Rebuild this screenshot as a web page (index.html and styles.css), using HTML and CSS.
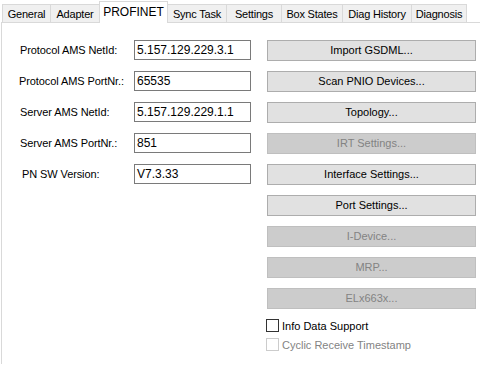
FILE: index.html
```html
<!DOCTYPE html>
<html>
<head>
<meta charset="utf-8">
<link rel="stylesheet" href="styles.css">
</head>
<body>
<div class="tabs">
  <div class="tab t-general">General</div>
  <div class="tab t-adapter">Adapter</div>
  <div class="tab active t-profinet">PROFINET</div>
  <div class="tab t-sync">Sync Task</div>
  <div class="tab t-settings">Settings</div>
  <div class="tab t-box">Box States</div>
  <div class="tab t-diaghist">Diag History</div>
  <div class="tab t-diag">Diagnosis</div>
</div>
<div class="panel">
  <div class="fields">
    <label class="lbl">Protocol AMS NetId:</label><div class="input">5.157.129.229.3.1</div>
    <label class="lbl lbl-tight">Protocol AMS PortNr.:</label><div class="input">65535</div>
    <label class="lbl">Server AMS NetId:</label><div class="input">5.157.129.229.1.1</div>
    <label class="lbl">Server AMS PortNr.:</label><div class="input">851</div>
    <label class="lbl lbl-indent">PN SW Version:</label><div class="input">V7.3.33</div>
  </div>
  <div class="actions">
    <div class="btn">Import GSDML...</div>
    <div class="btn">Scan PNIO Devices...</div>
    <div class="btn">Topology...</div>
    <div class="btn disabled">IRT Settings...</div>
    <div class="btn">Interface Settings...</div>
    <div class="btn">Port Settings...</div>
    <div class="btn disabled">I-Device...</div>
    <div class="btn disabled">MRP...</div>
    <div class="btn disabled">ELx663x...</div>
    <div class="checks">
      <div class="check"><span class="box"></span><span>Info Data Support</span></div>
      <div class="check off"><span class="box"></span><span>Cyclic Receive Timestamp</span></div>
    </div>
  </div>
</div>
</body>
</html>
```
FILE: styles.css
```css
html, body {
  margin: 0;
  padding: 0;
  background: #ffffff;
  width: 480px;
  height: 365px;
  overflow: hidden;
  font-family: "Liberation Sans", Arial, sans-serif;
  font-size: 11px;
  color: #000;
}
.tabs {
  display: flex;
  align-items: flex-end;
  height: 22px;
  padding-left: 2px;
  position: relative;
  z-index: 1;
}
.tab {
  height: 18px;
  line-height: 18px;
  background: #f0f0f0;
  border: 1px solid #d9d9d9;
  border-bottom: none;
  margin-left: -1px;
  box-sizing: border-box;
  white-space: nowrap;
  text-align: center;
  letter-spacing: -0.2px;
}
.tab:first-child { margin-left: 0; }
.t-general { width: 49px; }
.t-adapter { width: 50px; }
.t-profinet { width: 69px; }
.t-sync { width: 60px; }
.t-settings { width: 56px; }
.t-box { width: 62px; }
.t-diaghist { width: 70px; }
.t-diag { width: 56px; }
.tab.active {
  height: 22px;
  line-height: 20px;
  background: #fff;
  margin-bottom: -1px;
  font-size: 12px;
  letter-spacing: 0;
  position: relative;
}
.panel {
  display: flex;
  border-top: 1px solid #d9d9d9;
  border-left: 1px solid #d9d9d9;
  margin-left: 1px;
  height: 342px;
  padding-top: 17px;
  box-sizing: border-box;
}
.fields {
  display: grid;
  grid-template-columns: 114px 117px;
  grid-auto-rows: 20px;
  row-gap: 11px;
  padding-left: 18px;
  align-content: start;
}
.lbl {
  display: flex;
  align-items: center;
  white-space: nowrap;
  letter-spacing: -0.1px;
}
.lbl-tight { margin-left: -1px; }
.lbl-indent { margin-left: 2px; }
.input {
  border: 1px solid #7a7a7a;
  box-sizing: border-box;
  height: 20px;
  line-height: 18px;
  padding-left: 2px;
  font-size: 12px;
}
.actions {
  display: flex;
  flex-direction: column;
  gap: 10px;
  margin-left: 16px;
  width: 209px;
}
.btn {
  height: 21px;
  box-sizing: border-box;
  border: 1px solid #adadad;
  background: #e1e1e1;
  text-align: center;
  line-height: 19px;
}
.btn.disabled {
  background: #cccccc;
  border-color: #bfbfbf;
  color: #838383;
}
.checks {
  display: flex;
  flex-direction: column;
  gap: 6px;
  margin-left: -1px;
}
.check {
  display: flex;
  align-items: center;
  gap: 3px;
  height: 13px;
}
.check .box {
  width: 13px;
  height: 13px;
  box-sizing: border-box;
  border: 1px solid #333;
  background: #fff;
}
.check.off { color: #838383; }
.check.off .box { border-color: #cccccc; }
```
